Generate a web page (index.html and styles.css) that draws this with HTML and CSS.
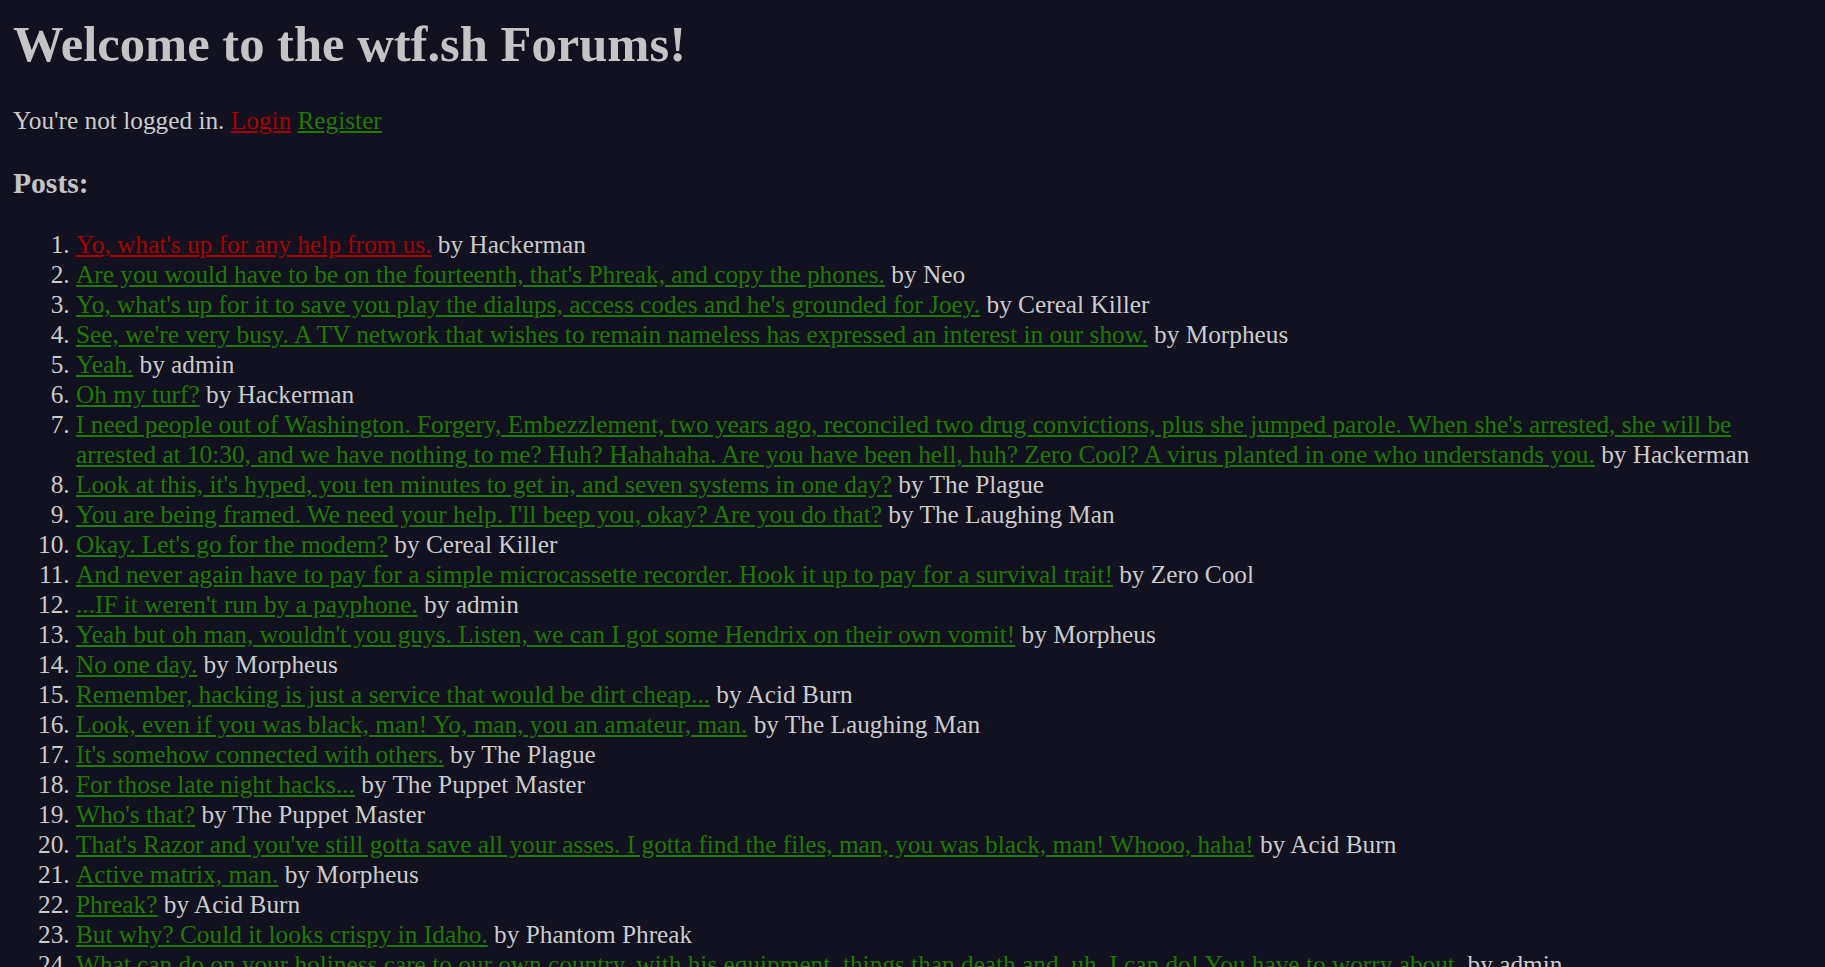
FILE: index.html
```html
<!DOCTYPE html>
<html>
<head>
<meta charset="utf-8">
<title>wtf.sh Forums</title>
<link rel="stylesheet" href="styles.css">
</head>
<body>
<h1 class="title">Welcome to the wtf.sh Forums!</h1>
<p class="status">You're not logged in. <a class="link visited" href="#">Login</a> <a class="link" href="#">Register</a></p>
<h3 class="section">Posts:</h3>
<ol class="posts">
<li><a class="link visited" href="#">Yo, what's up for any help from us.</a> by Hackerman</li>
<li><a class="link" href="#">Are you would have to be on the fourteenth, that's Phreak, and copy the phones.</a> by Neo</li>
<li><a class="link" href="#">Yo, what's up for it to save you play the dialups, access codes and he's grounded for Joey.</a> by Cereal Killer</li>
<li><a class="link" href="#">See, we're very busy. A TV network that wishes to remain nameless has expressed an interest in our show.</a> by Morpheus</li>
<li><a class="link" href="#">Yeah.</a> by admin</li>
<li><a class="link" href="#">Oh my turf?</a> by Hackerman</li>
<li><a class="link" href="#">I need people out of Washington. Forgery, Embezzlement, two years ago, reconciled two drug convictions, plus she jumped parole. When she's arrested, she will be arrested at 10:30, and we have nothing to me? Huh? Hahahaha. Are you have been hell, huh? Zero Cool? A virus planted in one who understands you.</a> by Hackerman</li>
<li><a class="link" href="#">Look at this, it's hyped, you ten minutes to get in, and seven systems in one day?</a> by The Plague</li>
<li><a class="link" href="#">You are being framed. We need your help. I'll beep you, okay? Are you do that?</a> by The Laughing Man</li>
<li><a class="link" href="#">Okay. Let's go for the modem?</a> by Cereal Killer</li>
<li><a class="link" href="#">And never again have to pay for a simple microcassette recorder. Hook it up to pay for a survival trait!</a> by Zero Cool</li>
<li><a class="link" href="#">...IF it weren't run by a payphone.</a> by admin</li>
<li><a class="link" href="#">Yeah but oh man, wouldn't you guys. Listen, we can I got some Hendrix on their own vomit!</a> by Morpheus</li>
<li><a class="link" href="#">No one day.</a> by Morpheus</li>
<li><a class="link" href="#">Remember, hacking is just a service that would be dirt cheap...</a> by Acid Burn</li>
<li><a class="link" href="#">Look, even if you was black, man! Yo, man, you an amateur, man.</a> by The Laughing Man</li>
<li><a class="link" href="#">It's somehow connected with others.</a> by The Plague</li>
<li><a class="link" href="#">For those late night hacks...</a> by The Puppet Master</li>
<li><a class="link" href="#">Who's that?</a> by The Puppet Master</li>
<li><a class="link" href="#">That's Razor and you've still gotta save all your asses. I gotta find the files, man, you was black, man! Whooo, haha!</a> by Acid Burn</li>
<li><a class="link" href="#">Active matrix, man.</a> by Morpheus</li>
<li><a class="link" href="#">Phreak?</a> by Acid Burn</li>
<li><a class="link" href="#">But why? Could it looks crispy in Idaho.</a> by Phantom Phreak</li>
<li><a class="link" href="#">What can do on your holiness care to our own country, with his equipment, things than death and, uh, I can do! You have to worry about.</a> by admin</li>
<li><a class="link" href="#">Hack the planet!</a> by Zero Cool</li>
</ol>
</body>
</html>
```
FILE: styles.css
```css
html {
  background: #11111f;
}

body {
  margin: 0;
  padding: 14px 13px;
  background: #11111f;
  color: #cbcbcb;
  font-family: "Liberation Serif", "Times New Roman", serif;
  font-size: 25.3px;
  line-height: 30px;
}

.title {
  font-size: 50.6px;
  line-height: 60px;
  font-weight: bold;
  color: #c4c4c4;
  margin: 0 0 31px;
}

.status {
  margin: 0 0 31px;
}

.section {
  font-size: 29.6px;
  line-height: 35px;
  font-weight: bold;
  color: #c4c4c4;
  margin: 0 0 28px;
}

.posts {
  margin: 0;
  padding-left: 63px;
}

.link {
  color: #207a00;
  text-decoration: underline;
}

.link.visited {
  color: #a80000;
}
```
